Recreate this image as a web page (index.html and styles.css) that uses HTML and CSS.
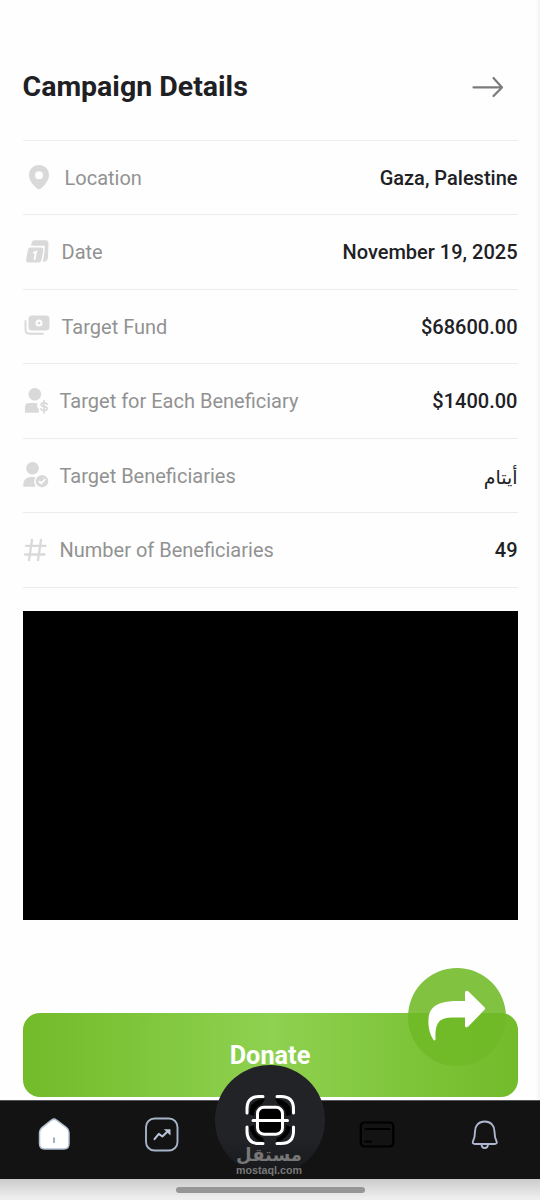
FILE: index.html
```html
<!DOCTYPE html>
<html lang="en">
<head>
<meta charset="utf-8">
<title>Campaign Details</title>
<link rel="stylesheet" href="styles.css">
</head>
<body>
<div class="screen">
  <main class="content">
    <header class="header">
      <h1 class="title">Campaign Details</h1>
      <svg class="arrow" width="34" height="24" viewBox="0 0 34 24"><path d="M2.500 12.400H31M22.500 3L31 12.400L22.500 21"/></svg>
    </header>
    <ul class="details">
      <li class="row">
        <svg class="icon wide" width="42" height="30" viewBox="0 0 42 30"><path fill-rule="evenodd" d="M16 3C10.200 3 6 7.400 6 13C6 19.500 11.500 24.500 14.300 26.700Q16 28 17.700 26.700C20.500 24.500 26 19.500 26 13C26 7.400 21.800 3 16 3ZM16 9.200A4 4 0 1 1 16 17.200A4 4 0 1 1 16 9.200Z"/></svg>
        <span class="label">Location</span><span class="value">Gaza, Palestine</span>
      </li>
      <li class="row">
        <svg class="icon mid" width="39" height="30" viewBox="0 0 39 30"><path d="M11.500 3.200H22.500Q25.600 3.200 25.400 6.500V8.800H8L8.800 5.500Q9.300 3.200 11.500 3.200Z"/><path d="M21.800 8H25.400L25 20Q24.900 24.800 20 24.800L21.600 13.500Z"/><path d="M7.500 10.500H18Q20.700 10.500 20.300 13.300L18.600 22.800Q18 25.500 15 25.500H6Q2.600 25.500 3.200 22.300L5 12.700Q5.400 10.500 7.500 10.500Z"/><path class="cut" d="M10 16L13 14.800L11.400 22.800"/></svg>
        <span class="label">Date</span><span class="value">November 19, 2025</span>
      </li>
      <li class="row">
        <svg class="icon mid" width="39" height="30" viewBox="0 0 39 30"><path fill-rule="evenodd" d="M9 4.500H23Q26.500 4.500 26.500 8V16Q26.500 19.500 23 19.500H9Q5.500 19.500 5.500 16V8Q5.500 4.500 9 4.500ZM16 8.500A3.500 3.500 0 1 0 16 15.500A3.500 3.500 0 1 0 16 8.500Z"/><circle cx="16" cy="12" r="1.300"/><path class="line" d="M2.500 10V19Q2.500 22.700 6.500 22.700H20"/></svg>
        <span class="label">Target Fund</span><span class="value">$68600.00</span>
      </li>
      <li class="row">
        <svg class="icon" width="37" height="30" viewBox="0 0 37 30"><circle cx="11.800" cy="8.200" r="6.300"/><path d="M6 17H14.500Q13.200 20.800 15.800 22.800V26.700H2V21Q2 17 6 17Z"/><path class="line thin" d="M24.300 18.300Q23.200 16.800 21 16.800C17.200 16.800 17.200 20.300 21 20.600C25.200 21 25 24.500 21 24.500Q18.500 24.500 17.800 22.800M21 14.500V26.800"/></svg>
        <span class="label">Target for Each Beneficiary</span><span class="value">$1400.00</span>
      </li>
      <li class="row">
        <svg class="icon" width="37" height="30" viewBox="0 0 37 30"><circle cx="9.500" cy="8.200" r="6.300"/><path d="M9.500 16.800Q11.200 16.800 12.500 17.500Q10 21.500 12.500 26.700H0.300V24Q1 16.800 9.500 16.800Z"/><circle cx="19" cy="21.200" r="6.200"/><path class="cut" d="M15.800 21.200L18.200 23.300L22.300 19"/></svg>
        <span class="label">Target Beneficiaries</span><span class="value arabic" lang="ar" dir="rtl">أيتام</span>
      </li>
      <li class="row">
        <svg class="icon" width="37" height="30" viewBox="0 0 37 30"><path class="line hash" d="M9 5L6 25.200M18 5L15 25.200M3 10.800H22.500M2 19.500H21.500"/></svg>
        <span class="label">Number of Beneficiaries</span><span class="value">49</span>
      </li>
    </ul>
    <div class="video"></div>
    <div class="action">
      <button class="donate">Donate</button>
      <div class="share"><svg width="98" height="98" viewBox="0 0 98 98"><path d="M57.500 23.200Q59 22 60.500 23.400L76.500 39.200Q77.800 40.500 76.500 41.800L60.300 58.600Q57.500 60.500 57 58V49.500H45C31 49.500 27 54.500 27.500 71.500Q26.500 73.500 25.200 71.500C21 65 20 57.500 20.500 51C21.500 35.500 35 33.500 48 33H57V25Q57 23.700 57.500 23.200Z"/></svg></div>
    </div>
  </main>
  <nav class="nav">
    <svg class="tab" width="36" height="38" viewBox="0 0 36 38"><path fill="#fff" stroke="#b0bfd2" stroke-width="1.500" d="M15.400 5.200Q18 3 20.600 5.200L30.500 12.600Q33 14.600 33 17.500V28.500Q33 34 28 34H8.500Q3.500 34 3.500 28.500V17.500Q3.500 14.600 6 12.600Z"/><path stroke="#8095b0" stroke-width="1.500" d="M18 22.500V28"/></svg>
    <svg class="tab" width="36" height="38" viewBox="0 0 36 38"><rect x="2" y="3.500" width="31.500" height="32" rx="8.500" fill="none" stroke="#a5b4c7" stroke-width="1.900"/><path fill="none" stroke="#bac6d5" stroke-width="2" stroke-linejoin="round" stroke-linecap="round" d="M10.500 24.200L14.800 18.900L18.400 21.500L24 16"/><path fill="#bac6d5" d="M19.800 14.200H26.500V20.500Z"/></svg>
    <div class="gap"></div>
    <svg class="tab" width="36" height="38" viewBox="0 0 36 38"><rect x="1.800" y="7.500" width="32.500" height="24" rx="3.500" fill="none" stroke="#000" stroke-width="2.200"/><path stroke="#000" stroke-width="2.200" stroke-linecap="round" d="M6.500 14H30.500M6.500 26.500H12"/></svg>
    <svg class="tab" width="36" height="38" viewBox="0 0 36 38"><path fill="none" stroke="#adb8d0" stroke-width="1.900" stroke-linejoin="round" d="M17.700 6.500C11.500 6.500 8 11 8 16.500C8 22 7.500 23.500 6 26.300C5.200 28 6 29 8 29H27.500C29.500 29 30.300 28 29.500 26.300C28 23.500 27.500 22 27.500 16.500C27.500 11 24 6.500 17.700 6.500ZM14.500 29Q14.500 33 17.700 33Q21 33 21 29"/></svg>
    <div class="scan">
      <svg width="110" height="110" viewBox="0 0 110 110"><path fill="#000" d="M36 40Q42 34 50 34L47 39Q39 42 39 51L34 49ZM60 34Q70 34 75 42L76 50L71 51Q71 42 63 39ZM34 62L39 60Q39 70 48 73L49 77Q38 76 34 62ZM71 60L76 62Q73 75 61 77L62 73Q71 70 71 60Z"/><rect x="42.500" y="42.200" width="25" height="27" rx="6.500" fill="#000" stroke="#fff" stroke-width="3"/><path fill="none" stroke="#fff" stroke-width="3" stroke-linecap="round" d="M38 55.500H72.500M32 48V44Q32 31.500 44 31.500H48M62 31.500H66Q78.500 31.500 78.500 44V48M78.500 62V66Q78.500 78.500 66 78.500H62M48 78.500H44Q32 78.500 32 66V62"/></svg>
    </div>
    <div class="watermark"><span class="brand" lang="ar">مستقل</span><span class="site">mostaql.com</span></div>
  </nav>
  <footer class="gesture"><div class="handle"></div></footer>
</div>
</body>
</html>
```
FILE: styles.css
```css
* { box-sizing: border-box; }
body { margin: 0; background: #fefefe; font-family: Roboto, "Noto Sans", sans-serif; }
.screen { width: 540px; height: 1200px; display: flex; flex-direction: column; overflow: hidden; background: linear-gradient(90deg, transparent 536px, #f4f4f4 539px), #fefefe; }
.content { height: 1100px; padding: 35px 22.5px 0; flex: none; }
.header { height: 104.500px; display: flex; align-items: center; justify-content: space-between; padding: 0 13px 1px 0; }
.title { margin: 0; font-size: 28.500px; line-height: 36px; font-weight: 700; color: #1e2024; white-space: nowrap; }
.arrow { fill: none; stroke: #7c7c7c; stroke-width: 2.200; stroke-linecap: round; stroke-linejoin: round; }
.details { list-style: none; margin: 0; padding: 0; border-top: 1.500px solid #eeeeee; }
.row { height: 74.500px; display: flex; align-items: center; border-bottom: 1.400px solid #ececec; }
.icon { flex: none; fill: #d9d9d9; }
.line { fill: none; stroke: #d9d9d9; stroke-width: 1.900; stroke-linecap: round; }
.thin { stroke-width: 1.700; }
.hash { stroke-width: 2.300; }
.cut { fill: none; stroke: #fff; stroke-width: 1.800; }
.label, .value { font-size: 20px; white-space: nowrap; padding-top: 1px; }
.label { color: #929292; }
.value { margin-left: auto; font-weight: 500; color: #202124; }
.arabic { font-family: "DejaVu Sans", sans-serif; font-weight: 400; font-size: 19px; padding-top: 3px; }
.video { height: 309px; margin-top: 23px; background: #000; }
.action { position: relative; margin-top: 93px; }
.donate { display: block; width: 100%; height: 84px; border: 0; border-radius: 17px; padding: 2px 0 0; background: linear-gradient(90deg, #72bb29, #8fd150 50%, #72bb29); color: #fff; font: 700 25.300px Roboto, sans-serif; }
.share { position: absolute; right: 11.500px; top: -45px; width: 98px; height: 98px; border-radius: 50%; background: rgba(112, 186, 39, 0.88); }
.share svg { display: block; fill: #fff; }
.nav { position: relative; flex: none; height: 79px; background: #131313; border-top: 1px solid #555; display: grid; grid-template-columns: repeat(5, 1fr); align-items: center; justify-items: center; padding: 0 1px 12px 0; }
.scan { position: absolute; left: 215px; top: -36px; width: 110px; height: 110px; border-radius: 50%; background: linear-gradient(#222327 65%, #17181a); }
.scan svg { display: block; }
.watermark { position: absolute; left: 219px; top: 43px; width: 100px; display: flex; flex-direction: column; align-items: center; color: #777; }
.brand { font: 700 18px/21px "DejaVu Sans", sans-serif; }
.site { font: 700 10.700px/11px "Liberation Sans", sans-serif; }
.gesture { height: 21px; flex: none; display: flex; justify-content: center; padding-top: 8px; background: linear-gradient(#cbcbcb, #eee 90%); }
.handle { width: 189px; height: 5.500px; border-radius: 3px; background: #969696; }
```
